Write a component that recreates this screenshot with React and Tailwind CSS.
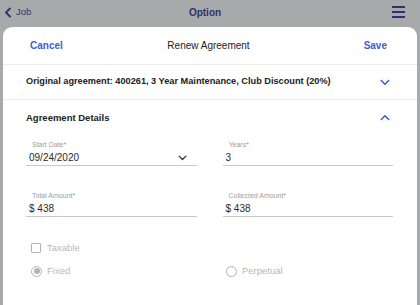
import React from "react";

const ChevronDown = ({ className }) => (
  <svg viewBox="0 0 12 8" className={className} fill="none" stroke="currentColor" strokeWidth="1.8" strokeLinecap="round" strokeLinejoin="round">
    <path d="M1.5 1.5 6 6l4.5-4.5" />
  </svg>
);

const ChevronUp = ({ className }) => (
  <svg viewBox="0 0 12 8" className={className} fill="none" stroke="currentColor" strokeWidth="1.8" strokeLinecap="round" strokeLinejoin="round">
    <path d="M1.5 6.5 6 2l4.5 4.5" />
  </svg>
);

const Field = ({ label, value, chevron }) => (
  <div className="flex flex-col border-b border-[#c9c9c9] h-[36px] justify-end pb-[0px]">
    <span className="pl-[6px] text-[7px] leading-[9px] text-[#9d9d9d] mb-[2px]">{label}</span>
    <div className="flex items-center justify-between pl-[3px] pr-[10px]">
      <span className="text-[10px] leading-[14px] text-[#2a2a2a]">{value}</span>
      {chevron && <ChevronDown className="w-[9px] h-[6px] text-[#333]" />}
    </div>
  </div>
);

const Radio = ({ checked, label }) => (
  <div className="flex items-center gap-[5px]">
    <span className="w-[11px] h-[11px] rounded-full border border-[#b3b3b3] flex items-center justify-center">
      {checked && <span className="w-[6px] h-[6px] rounded-full bg-[#b3b3b3]" />}
    </span>
    <span className="text-[9.5px] text-[#b8b8b8]">{label}</span>
  </div>
);

export default function App() {
  return (
    <div
      className="w-[420px] h-[305px] bg-[#a8a9aa] flex flex-col overflow-hidden"
      style={{ fontFamily: "Roboto, 'Liberation Sans', sans-serif" }}
    >
      <div
        className="h-[27px] flex items-center justify-between pl-[5px] pr-[15px] text-[#2d336b]"
        style={{ fontFamily: "'Liberation Sans', Arial, sans-serif" }}
      >
        <div className="flex items-center gap-[5px] w-[60px] -mt-[3px]">
          <svg viewBox="0 0 6 10" className="w-[6px] h-[11px]" fill="none" stroke="currentColor" strokeWidth="1.8" strokeLinecap="round" strokeLinejoin="round">
            <path d="M5 1 1 5l4 4" />
          </svg>
          <span className="text-[9.5px]">Job</span>
        </div>
        <span className="text-[10px] font-bold -mt-[3px]">Option</span>
        <div className="w-[60px] flex justify-end -mt-[3px]">
          <div className="flex flex-col gap-[3px]">
            <span className="block w-[13px] h-[2px] bg-[#2d336b]" />
            <span className="block w-[13px] h-[2px] bg-[#2d336b]" />
            <span className="block w-[13px] h-[2px] bg-[#2d336b]" />
          </div>
        </div>
      </div>

      <div className="flex-1 mx-[3px] bg-white rounded-t-[9px] flex flex-col" style={{ fontFamily: "'Liberation Sans', Arial, sans-serif" }}>
        <div className="h-[38px] flex items-center justify-between pl-[27px] pr-[30px] border-b border-[#ededed]">
          <span className="text-[10px] font-bold text-[#3f5ad8] w-[50px]">Cancel</span>
          <span className="text-[10px] text-[#222]">Renew Agreement</span>
          <span className="text-[10px] font-bold text-[#3f5ad8] w-[50px] text-right">Save</span>
        </div>
        <div className="h-[35px] flex items-center justify-between pl-[23px] pr-[27px] border-b border-[#ededed]">
          <span className="text-[9.2px] font-bold text-[#222]">
            Original agreement: 400261, 3 Year Maintenance, Club Discount (20%)
          </span>
          <ChevronDown className="w-[10px] h-[7px] text-[#3f5ad8]" />
        </div>
        <div className="h-[35px] flex items-center justify-between pl-[23px] pr-[27px]">
          <span className="text-[9.5px] font-bold text-[#222] mt-[1px]">Agreement Details</span>
          <ChevronUp className="w-[10px] h-[7px] text-[#3f5ad8]" />
        </div>
        <div className="grid grid-cols-2 gap-x-[26px] gap-y-[15px] pl-[23px] pr-[24px] -mt-[5px]">
          <Field label="Start Date*" value="09/24/2020" chevron />
          <Field label="Years*" value="3" />
          <Field label="Total Amount*" value="$ 438" />
          <Field label="Collected Amount*" value="$ 438" />
        </div>
        <div className="pl-[28px] pt-[24px] flex flex-col gap-[9px]">
          <div className="flex items-center gap-[6px]">
            <span className="w-[10px] h-[10px] border border-[#b3b3b3] rounded-[1px]" />
            <span className="text-[9.5px] text-[#b8b8b8]">Taxable</span>
          </div>
          <div className="grid grid-cols-2 gap-x-[26px] pr-[24px]">
            <Radio checked label="Fixed" />
            <div className="pl-[1px]">
              <Radio label="Perpetual" />
            </div>
          </div>
        </div>
      </div>
    </div>
  );
}
